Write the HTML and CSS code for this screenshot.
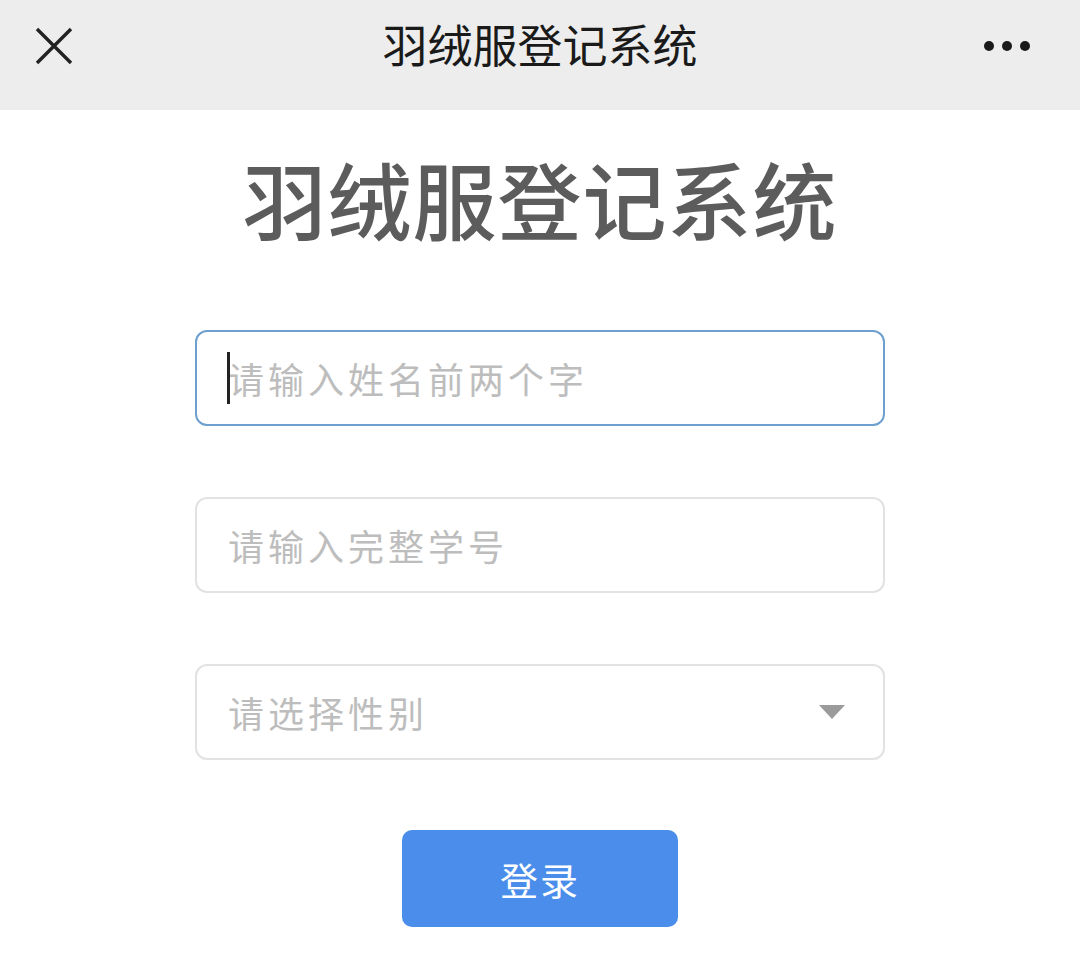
FILE: index.html
```html
<!DOCTYPE html>
<html lang="zh-CN">
<head>
    <meta charset="UTF-8">
    <meta name="viewport" content="width=device-width, initial-scale=1.0">
    <title>羽绒服登记系统</title>
    <link rel="stylesheet" href="styles.css">
</head>
<body>

    <div class="top-bar">
        <div class="bar-close">
            <svg width="38" height="38" viewBox="0 0 38 38">
                <path d="M2 2 L36 36 M36 2 L2 36" stroke="#222" stroke-width="3.4" fill="none"/>
            </svg>
        </div>
        <div class="bar-title">羽绒服登记系统</div>
        <div class="bar-more">
            <span class="dot"></span><span class="dot"></span><span class="dot"></span>
        </div>
    </div>

    <div class="page">
        <div class="page-title">羽绒服登记系统</div>

        <div class="form">
            <div class="field field-active">
                <span class="caret"></span>
                <span class="placeholder">请输入姓名前两个字</span>
            </div>

            <div class="field">
                <span class="placeholder">请输入完整学号</span>
            </div>

            <div class="field field-select">
                <span class="placeholder">请选择性别</span>
                <span class="arrow"></span>
            </div>

            <button class="login-btn">登录</button>
        </div>
    </div>

</body>
</html>
```

FILE: styles.css
```css
body {
    font-family: 'Noto Sans CJK SC', 'Noto Sans', sans-serif;
    margin: 0;
    padding: 0;
    background-color: #ffffff;
    color: #333;
}

.top-bar {
    height: 110px;
    background: #ededed;
    display: flex;
    align-items: center;
    justify-content: space-between;
    padding: 0 50px 18px 35px;
    box-sizing: border-box;
    position: relative;
}

.bar-close {
    width: 38px;
    height: 38px;
    display: flex;
}

.bar-title {
    position: absolute;
    left: 0;
    right: 0;
    top: 14px;
    text-align: center;
    font-size: 45px;
    line-height: 60px;
    color: #1a1a1a;
    font-weight: 400;
}

.bar-more {
    display: flex;
    gap: 8px;
}

.dot {
    width: 10px;
    height: 10px;
    border-radius: 50%;
    background: #1a1a1a;
}

.page {
    display: flex;
    flex-direction: column;
    align-items: center;
}

.page-title {
    margin-top: 38px;
    font-size: 84px;
    line-height: 100px;
    color: #5c5c5c;
    font-weight: 500;
    letter-spacing: 1px;
}

.form {
    width: 690px;
    margin-top: 82px;
    display: flex;
    flex-direction: column;
    align-items: center;
}

.field {
    width: 100%;
    height: 96px;
    box-sizing: border-box;
    border: 2px solid #e2e2e2;
    border-radius: 12px;
    display: flex;
    align-items: center;
    padding: 0 32px 0 31px;
    margin-bottom: 71px;
    position: relative;
}

.field-active {
    border-color: #6d9fcf;
}

.placeholder {
    font-size: 36px;
    color: #bdbdbd;
    letter-spacing: 4px;
}

.caret {
    position: absolute;
    left: 30px;
    top: 20px;
    width: 3px;
    height: 52px;
    background: #222;
}

.field-select {
    justify-content: space-between;
    margin-bottom: 70px;
}

.arrow {
    width: 0;
    height: 0;
    border-left: 13px solid transparent;
    border-right: 13px solid transparent;
    border-top: 14px solid #9b9b9b;
    margin-right: 6px;
}

.login-btn {
    width: 276px;
    height: 97px;
    background: #4a8dea;
    border: none;
    border-radius: 10px;
    color: #ffffff;
    font-family: inherit;
    font-size: 38px;
    letter-spacing: 2px;
}
```
